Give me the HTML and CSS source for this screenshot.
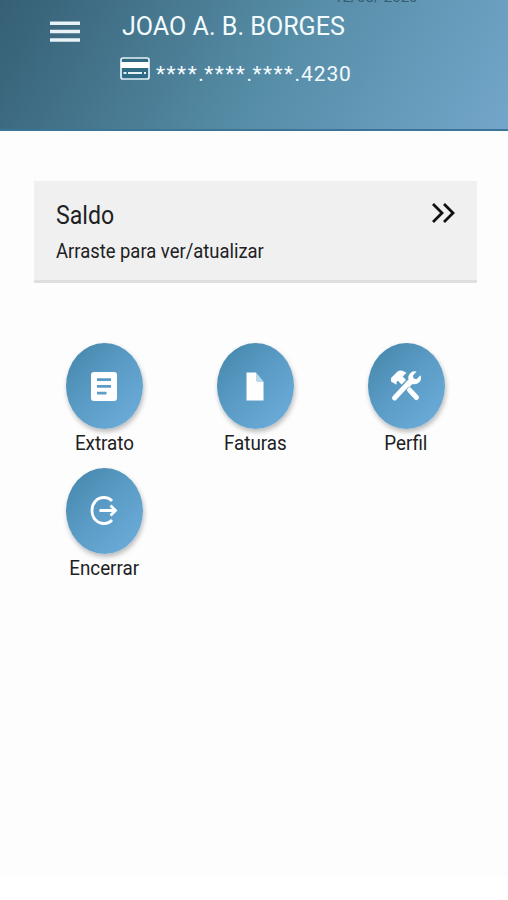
FILE: index.html
```html
<!DOCTYPE html>
<html lang="pt-BR">
<head>
<meta charset="utf-8">
<title>Cartão</title>
<link rel="stylesheet" href="styles.css">
</head>
<body>
<div class="app">
<header class="header">
  <span class="clip">12/08/ 2020</span>
  <svg class="menu" viewBox="0 0 30 22"><path d="M0 2.2h30M0 10.500h30M0 19h30"/></svg>
  <div class="account">
    <div class="name"><span>JOAO A. B. BORGES</span></div>
    <div class="card-row">
      <svg class="card-icon" viewBox="0 0 30 23"><rect class="frame" x="1" y="1" width="28" height="21" rx="2"/><path class="stripe" d="M1 8h28"/><path class="detail" d="M3.500 16h3m1.500 0h14m2 0h2"/></svg>
      <span class="stars">****</span><span class="dot">.</span><span class="stars">****</span><span class="dot">.</span><span class="stars">****</span><span class="digits">.4230</span>
    </div>
  </div>
</header>
<main>
  <section class="balance">
    <div><h1><span>Saldo</span></h1><p><span>Arraste para ver/atualizar</span></p></div>
    <svg class="chevrons" viewBox="0 0 24 20"><path d="m2 1 9 9-9 9M13 1l9 9-9 9"/></svg>
  </section>
  <nav class="actions">
    <a class="action"><span class="circle"><svg viewBox="0 0 26 29"><path fill-rule="evenodd" d="M3 0h20q3 0 3 3v23q0 3-3 3H3q-3 0-3-3V3q0-3 3-3ZM6 6.300v2.800h14V6.300ZM6 13v2.800h14V13ZM6 19.700v2.800h9.500v-2.800Z"/></svg></span><span class="label">Extrato</span></a>
    <a class="action"><span class="circle"><svg viewBox="0 0 26 29"><path d="M4.500.5H14v7.200q0 1.800 1.800 1.800h5.700v19h-17Z"/><path class="fold" d="M14 .5 21.500 9.500h-5.700q-1.800 0-1.800-1.800Z"/></svg></span><span class="label">Faturas</span></a>
    <a class="action"><span class="circle"><svg class="tools" viewBox="0 0 32 32"><path class="handle" d="M4.500 28 18.500 13M19.500 20l7 7.500"/><path d="M1 11.500V8l6-6q3-2.500 7-.5l2.500 1.300-3.800 3.700 3.300 3.500-4.500 4.500-3.600-3.700L6.500 12v2.800Z"/><path d="M26.500 1.500 23 5.500l.5 3 3 .8 4-4q1.500 4-1.300 7-2.800 2.700-6.700 1.700l-3.500 3.500-4-4 3.500-3.500q-1-4 1.700-6.800 2.600-2.600 6.300-1.700Z"/></svg></span><span class="label">Perfil</span></a>
    <a class="action"><span class="circle"><svg class="exit" viewBox="0 0 28 30"><path d="M22 5.500Q19 2 14 2C7 2 2 7.500 2 15s5 13 12 13q5 0 8-3.500M9.500 15H25M20.500 10l5 5-5 5"/></svg></span><span class="label">Encerrar</span></a>
  </nav>
</main>
</div>
</body>
</html>
```
FILE: styles.css
```css
* { box-sizing: border-box; }
body { margin: 0; background: #fff; color: #202124; font-family: Roboto, sans-serif; }
.app { height: 876px; background: #fdfdfd; }
.header { position: relative; display: flex; height: 131px; overflow: hidden; color: #f3fbff; background: linear-gradient(120deg, #355f74 0%, #558ca5 52%, #73a6ca 100%); border-bottom: 2px solid #3b7497; }
.clip { position: absolute; left: 334px; top: -13px; color: #355c72; font-size: 15px; line-height: 20px; white-space: nowrap; }
.menu { width: 30px; height: 22px; margin: 21px 0 0 50px; fill: none; stroke: #e8f2f7; stroke-width: 3.500; }
.account { margin-left: 42px; padding-top: 10px; }
.name { height: 32px; font-size: 26px; line-height: 32px; white-space: nowrap; }
.name span, h1 span, p span, .label { display: inline-block; transform-origin: left center; }
.name span { transform: scaleX(.965); }
.card-row { display: flex; height: 32px; margin-top: 15px; font-size: 21px; line-height: 35px; }
.card-icon { width: 30px; height: 23px; margin: 0 6px 0 -2px; fill: none; stroke: #e4f1f7; }
.frame { stroke-width: 1.700; fill: #316a84; }
.stripe { stroke-width: 6; stroke: #fff; }
.detail { stroke-width: 1.800; }
.stars { letter-spacing: 1.500px; }
.dot { width: 6px; }
.digits { letter-spacing: .9px; }
.balance { display: flex; justify-content: space-between; width: 443px; height: 102px; margin: 50px 0 0 34px; padding: 18px 22px 0 22px; background: #f0f0f0; border-bottom: 3px solid #dfdfdf; }
h1, p { margin: 0; font-weight: 400; white-space: nowrap; }
h1 { font-size: 25px; line-height: 33px; }
h1 span { transform: scaleX(.925); }
p { margin-top: 4px; font-size: 20px; line-height: 30px; }
p span { transform: scaleX(.921); }
.chevrons { width: 24px; height: 20px; margin-top: 4px; fill: none; stroke: #111; stroke-width: 2.800; }
.actions { display: grid; grid-template-columns: repeat(3, 151px); grid-auto-rows: 124.500px; margin: 60px 0 0 28.500px; }
.action { display: flex; flex-direction: column; align-items: center; }
.circle { display: flex; align-items: center; justify-content: center; width: 77px; height: 86px; border-radius: 50%; background: linear-gradient(135deg, #4385a8, #5b9dc7 50%, #70aedc); box-shadow: 1px 3px 5px #0004; }
.circle svg { width: 26px; height: 29px; fill: #fff; }
.circle .fold { fill: #b9d9ec; }
.circle .tools { width: 32px; height: 32px; }
.handle { fill: none; stroke: #fff; stroke-width: 5; stroke-linecap: round; }
.circle .exit { width: 28px; height: 31px; fill: none; stroke: #fff; stroke-width: 2.800; }
.label { font-size: 20px; line-height: 28px; transform: scaleX(.94); transform-origin: center; white-space: nowrap; }
```
